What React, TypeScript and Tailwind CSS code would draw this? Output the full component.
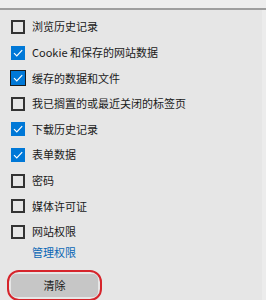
import React from "react";

const items = [
  { label: "浏览历史记录", checked: false },
  { label: "Cookie 和保存的网站数据", checked: true },
  { label: "缓存的数据和文件", checked: true, focused: true },
  { label: "我已搁置的或最近关闭的标签页", checked: false },
  { label: "下载历史记录", checked: true },
  { label: "表单数据", checked: true },
  { label: "密码", checked: false },
  { label: "媒体许可证", checked: false },
  { label: "网站权限", checked: false },
];

function Box({ checked, focused }: { checked: boolean; focused?: boolean }) {
  if (checked) {
    return (
      <span
        className={
          "flex h-[14px] w-[14px] shrink-0 items-center justify-center bg-[#0078d7] " +
          (focused ? "outline outline-[1.5px] outline-[#1a1a1a]" : "")
        }
      >
        <svg viewBox="0 0 14 14" className="h-[14px] w-[14px]">
          <path d="M3 7.2 L5.8 10 L11.2 4.2" fill="none" stroke="#ffffff" strokeWidth="1.2" />
        </svg>
      </span>
    );
  }
  return <span className="h-[14px] w-[14px] shrink-0 border-2 border-[#333333]" />;
}

export default function App() {
  return (
    <div
      className="relative flex h-[300px] w-[266px] flex-col overflow-hidden bg-[#e6e6e6] text-[11px] text-[#1a1a1a]"
      style={{ fontFamily: '"Noto Sans CJK SC", "Noto Sans", sans-serif' }}
    >
      {/* top strip */}
      <div className="h-[8px] shrink-0 bg-[#ededed]" />
      <div className="h-[1.5px] shrink-0 bg-[#9e9e9e]" />

      <div className="flex flex-1 pr-[4px]">
        <div className="flex flex-1 flex-col pt-[4.7px]">
          {items.map((it) => (
            <div key={it.label} className="flex h-[25.6px] items-center gap-[7px] pl-[11px]">
              <Box checked={it.checked} focused={it.focused} />
              <span className="whitespace-nowrap leading-none">{it.label}</span>
            </div>
          ))}
          <div className="flex h-[16px] items-center pl-[32px] text-[#0a67b5]">管理权限</div>

          <div className="ml-[7px] mt-[9px] h-[31px] w-[95px] rounded-[12px] border-[2.5px] border-[#d6242b] p-[2px]">
            <div className="flex h-full w-full items-center justify-center rounded-[5px] bg-[#c6c6c6] pt-[1px]">
              清除
            </div>
          </div>
        </div>
      </div>
      {/* right edge strip */}
      <div className="absolute right-0 top-[9.5px] bottom-0 w-[4px] bg-[#ececec]" />
    </div>
  );
}
